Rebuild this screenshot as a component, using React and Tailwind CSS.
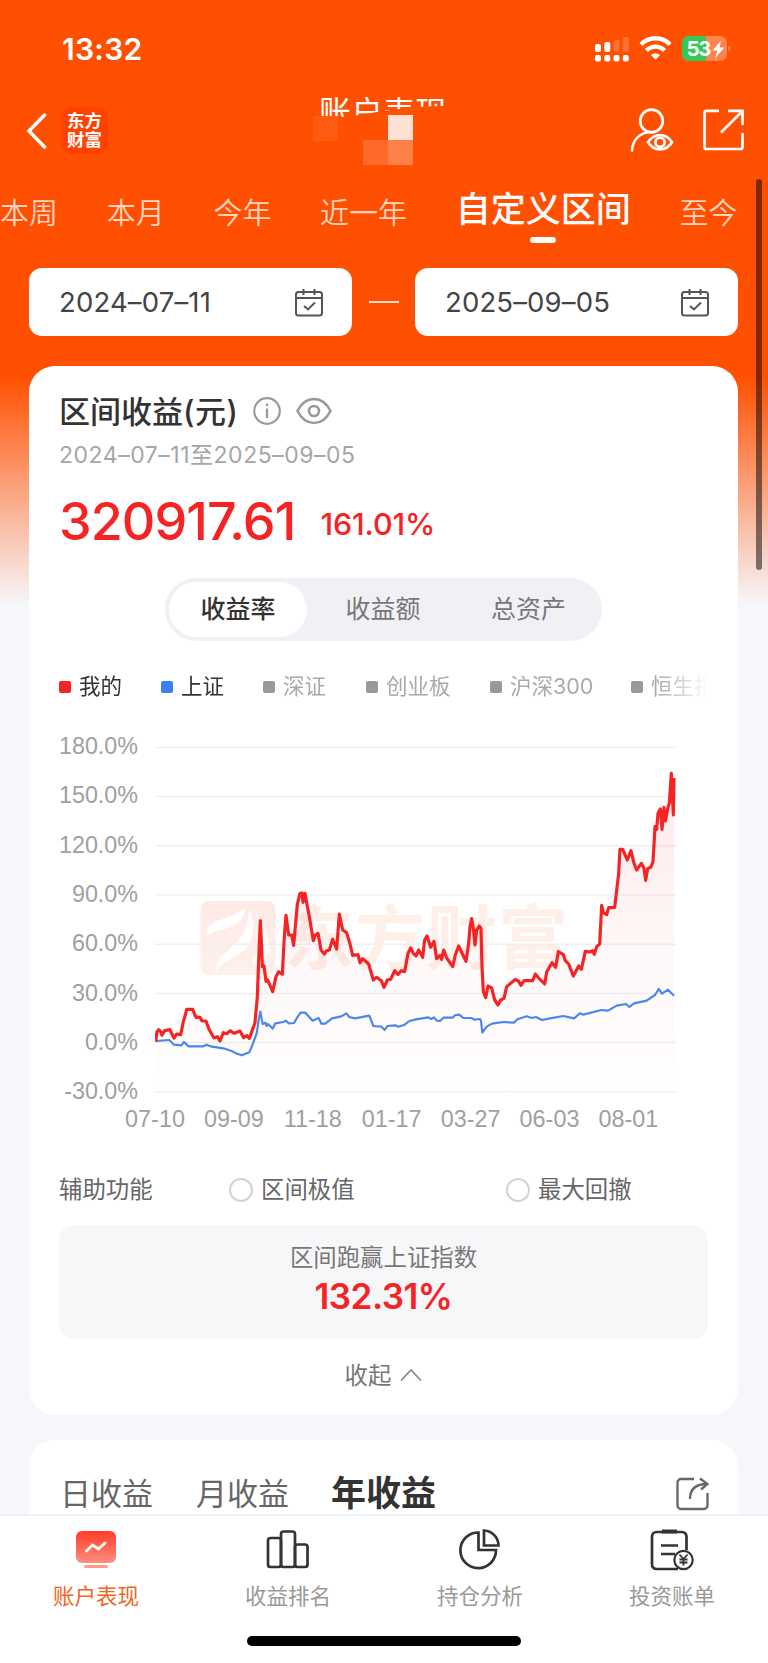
import React from "react";

const ranges = ["本周", "本月", "今年", "近一年", "自定义区间", "至今"];

const legend = [
  { name: "我的", dot: "bg-[#f52323]", text: "text-[#333]", width: "w-[102px]" },
  { name: "上证", dot: "bg-[#3b7ff0]", text: "text-[#333]", width: "w-[102px]" },
  { name: "深证", dot: "bg-[#999]", text: "text-[#aaa]", width: "w-[103px]" },
  { name: "创业板", dot: "bg-[#999]", text: "text-[#aaa]", width: "w-[124px]" },
  { name: "沪深300", dot: "bg-[#999]", text: "text-[#aaa]", width: "w-[141px]" },
  { name: "恒生指", dot: "bg-[#999]", text: "text-[#aaa]", width: "w-[141px]" },
];

const yLabels = ["180.0%", "150.0%", "120.0%", "90.0%", "60.0%", "30.0%", "0.0%", "-30.0%"];
const xLabels = ["07-10", "09-09", "11-18", "01-17", "03-27", "06-03", "08-01"];

const mine =
  "347,965 351,935 356,929 362,935 366,946 374,932 390,929 396,943 402,954 410,942 422,944 430,905 436,885 440,868 458,868 468,892 480,892 486,903 498,903 507,928 522,954 532,950 540,963 550,938 560,941 571,932 582,940 600,933 611,953 620,947 628,955 636,933 645,908 652,830 656,720 661,602 664,660 667,740 672,738 678,784 683,780 698,815 708,770 716,755 727,763 733,650 738,586 746,645 755,645 761,676 772,553 780,520 786,519 789,547 795,520 800,548 808,590 820,662 826,645 834,640 843,690 853,702 860,692 868,690 878,658 890,687 898,582 908,630 920,638 930,672 938,706 954,704 960,728 968,716 986,732 1000,780 1010,772 1024,782 1032,802 1042,780 1052,778 1064,752 1074,763 1084,752 1094,755 1104,700 1112,684 1120,700 1128,708 1136,690 1148,712 1154,660 1161,648 1172,682 1182,664 1190,716 1200,706 1205,718 1211,690 1220,714 1238,740 1246,705 1256,678 1278,724 1286,670 1290,620 1295,596 1300,625 1305,675 1310,630 1318,618 1323,625 1326,740 1330,815 1337,833 1344,798 1355,804 1364,840 1374,855 1382,840 1392,835 1400,800 1412,790 1426,778 1436,784 1443,796 1452,782 1478,782 1486,762 1496,774 1514,792 1520,756 1536,728 1547,742 1555,695 1570,704 1576,722 1586,732 1600,768 1616,738 1624,748 1636,694 1650,696 1658,692 1663,703 1670,680 1679,672 1685,556 1690,578 1700,584 1706,563 1724,562 1736,460 1740,388 1748,388 1762,420 1773,392 1782,430 1790,450 1804,430 1812,445 1817,481 1823,446 1833,441 1839,425 1845,320 1850,328 1854,280 1861,267 1866,328 1872,262 1876,303 1884,262 1888,250 1894,160 1900,285 1902,174";

const index =
  "347,963 388,960 402,974 424,976 432,966 446,979 490,979 500,974 516,980 550,985 575,993 588,1000 605,1006 628,997 636,978 650,940 656,900 661,875 668,912 676,908 680,918 684,912 698,926 706,910 730,906 738,902 746,910 762,909 772,892 782,878 796,878 818,902 836,894 844,911 856,911 876,895 904,889 919,880 928,891 945,895 988,887 1000,918 1024,920 1034,930 1042,918 1066,916 1075,920 1094,914 1108,903 1128,898 1164,892 1174,897 1182,892 1190,902 1200,903 1210,893 1238,893 1246,885 1258,884 1270,894 1294,894 1304,899 1320,897 1323,903 1327,938 1340,920 1356,911 1390,906 1422,908 1432,898 1460,889 1475,894 1488,891 1506,900 1526,896 1570,888 1602,895 1620,880 1630,884 1684,870 1704,872 1730,857 1758,852 1768,861 1782,850 1820,842 1845,825 1856,807 1866,821 1884,809 1902,827";

function StatusBar() {
  return (
    <div className="flex h-[98px] items-center justify-between pr-[36px] pl-[62px]">
      <span className="text-[30px] leading-none font-semibold tracking-[0.3px]">13:32</span>
      <svg width="138" height="28" viewBox="0 0 138 28" fill="#fff">
        <rect x="1" y="9" width="6" height="8" rx="2" />
        <rect x="10.300" y="7" width="6" height="10" rx="2" />
        <rect x="19.500" y="5" width="6" height="12" rx="2" opacity=".2" />
        <rect x="28.800" y="2" width="6" height="15" rx="2" opacity=".2" />
        <rect x="1" y="20" width="6" height="6.500" rx="2" />
        <rect x="10.300" y="20" width="6" height="6.500" rx="2" />
        <rect x="19.500" y="20" width="6" height="6.500" rx="2" />
        <rect x="28.800" y="20" width="6" height="6.500" rx="2" />
        <g fill="none" stroke="#fff" strokeWidth="4.400">
          <path d="M47 9.500a20 20 0 0 1 29 0" />
          <path d="M52.500 15.500a12.500 12.500 0 0 1 18 0" />
        </g>
        <path d="M57 20a6.500 6.500 0 0 1 9 0L61.500 24.700Z" />
        <rect x="88" y="1" width="45" height="25" rx="7" opacity=".3" />
        <path d="M95 1h17v25H95a7 7 0 0 1-7-7V8a7 7 0 0 1 7-7Z" fill="#34c759" />
        <path d="M134.500 10.500a3.500 3.500 0 0 1 0 6Z" opacity=".4" />
        <text x="92.500" y="21" fontSize="20.500" fontWeight="700" textLength="25">53</text>
        <path d="M127 5.500l-8.500 10h5L121 23l9.500-10.500h-5Z" />
      </svg>
    </div>
  );
}

function TitleBar() {
  return (
    <div className="flex h-[80px] items-center justify-between pr-[24px] pl-[26px]">
      <div className="flex items-center gap-[14px]">
        <svg className="mt-[-15px]" width="21" height="36" viewBox="0 0 21 36" fill="none" stroke="#fff" strokeWidth="3.500">
          <path d="M18.500 2L3 18l15.500 16" strokeLinecap="round" />
        </svg>
        <div className="mt-[-16px] flex h-[47px] w-[47px] flex-col items-center justify-center rounded-[10px] bg-[#ff4200] text-[17.500px] leading-[19px] font-bold">
          <span>东方</span>
          <span>财富</span>
        </div>
      </div>
      <div className="relative left-[3px] h-[80px] w-[128px]">
        <h1 className="absolute top-[-1px] left-[11px] text-[32px] leading-[32px] whitespace-nowrap [clip-path:polygon(0_0,100%_0,100%_27%,75%_31%,50%_44%,25%_60%,0_66%)]">
          账户表现
        </h1>
        <i className="absolute top-[18px] left-[5px] size-[25px] bg-[#ff5b13]" />
        <i className="absolute top-[17px] left-[80px] size-[25px] bg-[#ffe0d3]" />
        <i className="absolute top-[42px] left-[55px] size-[25px] bg-[#ff6a2a]" />
        <i className="absolute top-[42px] left-[80px] size-[25px] bg-[#ff8048]" />
      </div>
      <svg className="mt-[-16px]" width="114" height="44" viewBox="0 0 114 44" fill="none" stroke="#fff" strokeWidth="2.700">
        <circle cx="21.500" cy="13" r="11.300" />
        <path d="M2 42.500C2.700 31 10.500 24.500 21 24" strokeLinecap="round" />
        <path d="M18 34.200C21 29.500 25 27 30 27s9 2.500 12 7.200c-3 4.700-7 7.200-12 7.200s-9-2.500-12-7.200Z" />
        <circle cx="30" cy="34.200" r="4.600" />
        <path d="M89 2.800H76.500a2 2 0 0 0-2 2V39a2 2 0 0 0 2 2H110.500a2 2 0 0 0 2-2V25M98 2.800h14.500V17M112 3.500L91 24.500" />
      </svg>
    </div>
  );
}

function DateBox({ value }) {
  return (
    <div className="flex h-[68px] w-[323px] items-center justify-between rounded-[13px] bg-white pr-[29px] pl-[30px]">
      <span className="mt-[2px] text-[27.500px] leading-none tracking-[0.15px] text-[#444]">{value}</span>
      <svg width="28" height="29" viewBox="0 0 28 29" fill="none" stroke="#555" strokeWidth="2">
        <rect x="1" y="4" width="26" height="23.500" rx="2.500" />
        <path d="M1 10h26M8.500 1v6M19.500 1v6M9 18l4 3.500 7-7" />
      </svg>
    </div>
  );
}

function Chart() {
  return (
    <svg className="block" width="650" height="410" viewBox="59 730 650 410">
      <defs>
        <linearGradient id="area" x1="0" y1="0" x2="0" y2="1">
          <stop offset="0" stopColor="#f52323" stopOpacity=".1" />
          <stop offset=".6" stopColor="#f52323" stopOpacity=".03" />
          <stop offset="1" stopColor="#f52323" stopOpacity=".008" />
        </linearGradient>
        <linearGradient id="mark" x1="0" y1="0" x2="0" y2="1">
          <stop offset="0" stopColor="#fdeae7" />
          <stop offset="1" stopColor="#fef0ea" />
        </linearGradient>
      </defs>
      <rect x="200.500" y="901" width="75" height="74" rx="8" fill="url(#mark)" />
      <path
        d="M207 932c0-14 24-11 38-24-1 15-14 20-24 22-7 1-10 4-14 6ZM216 971c2-24 31-20 33-62 9 20 3 38-11 46-10 5-16 9-22 16ZM252 960c10-12 11-28 3-50 8 12 14 26 15 42-7 6-11 11-11 21-3-8-4-10-7-13Z"
        fill="#fff"
      />
      <text x="284" y="964" fontSize="70" fontWeight="700" fill="#feefe8" textLength="284">
        东方财富
      </text>
      {yLabels.map((label, i) => (
        <g key={label}>
          <path d={`M155 ${747.4 + i * 49.2}H676`} stroke="#eff0f4" strokeWidth="1.500" />
          <text x="138" y={754 + i * 49.3} textAnchor="end" fontSize="23.300" fill="#a0a0a0" className="font-['Liberation_Sans']">
            {label}
          </text>
        </g>
      ))}
      {xLabels.map((label, i) => (
        <text key={label} x={155 + i * 78.9} y="1127" textAnchor="middle" fontSize="23.400" fill="#a0a0a0" className="font-['Liberation_Sans']">
          {label}
        </text>
      ))}
      <svg x="155" y="740" width="522" height="360" viewBox="345 60 1566 1080" fill="none" strokeLinejoin="round">
        <polygon points={`347,1115 ${mine} 1904,1115`} fill="url(#area)" />
        <polyline points={index} stroke="#4a86ee" strokeWidth="6.500" />
        <polyline points={mine} stroke="#f52323" strokeWidth="9.500" />
      </svg>
    </svg>
  );
}

function PerformanceCard() {
  return (
    <section className="mt-[30px] mr-[30px] ml-[29px] h-[1049px] rounded-[26px] bg-white px-[30px] pt-[23px]">
      <div className="flex h-[44px] items-center">
        <h2 className="text-[31px] leading-none font-medium text-[#333]">
          区间收益<span className="tracking-[0.5px]">(元)</span>
        </h2>
        <svg className="ml-[14px]" width="82" height="30" viewBox="0 0 82 30" fill="none" stroke="#999" strokeWidth="2.200">
          <circle cx="15" cy="15" r="12.800" />
          <path d="M15 12.500V22M15 7.500V10" strokeWidth="2.300" />
          <path d="M45.500 15C50 6 56 3 62 3S74 6 78.500 15C74 24 68 27 62 27S50 24 45.500 15Z" strokeWidth="2.600" />
          <circle cx="62" cy="15" r="5" strokeWidth="2.600" />
        </svg>
      </div>
      <p className="mt-[1px] flex h-[42px] items-center text-[23px] leading-none tracking-[0.52px] text-[#a6a6a6]">
        2024–07–11至2025–09–05
      </p>
      <div className="mt-[14px] flex h-[64px] items-center text-[#f52323]">
        <span className="text-[52px] leading-[64px] font-medium tracking-[-0.9px]">320917.61</span>
        <span className="mt-[4px] ml-[25px] text-[30.500px] leading-none font-medium tracking-[-0.1px]">161.01%</span>
      </div>
      <div className="mt-[24px] ml-[106px] flex h-[63px] w-[437px] items-center rounded-full bg-[#f1f1f5] p-[4px] text-[25px] leading-none text-[#777]">
        <span className="flex h-full w-[138px] items-center justify-center rounded-full bg-white font-medium text-[#333]">
          收益率
        </span>
        <span className="w-[152px] text-center">收益额</span>
        <span className="w-[139px] text-center">总资产</span>
      </div>
      <div className="mt-[30px] flex h-[32px] overflow-hidden [mask-image:linear-gradient(to_right,#000_92%,transparent_100%)]">
        {legend.map((item) => (
          <div key={item.name} className={`flex shrink-0 items-center ${item.width}`}>
            <i className={`mr-[8px] size-[12px] rounded-[2px] ${item.dot}`} />
            <span className={`text-[21.500px] leading-none whitespace-nowrap ${item.text}`}>{item.name}</span>
          </div>
        ))}
      </div>
      <div className="mt-[27px]">
        <Chart />
      </div>
      <div className="mt-[34px] flex h-[32px] items-center text-[23.400px] leading-none text-[#666]">
        <span className="w-[170px]">辅助功能</span>
        <span className="flex w-[277px] items-center gap-[8px]">
          <i className="size-[24px] rounded-full border-2 border-[#d3d3d3]" />
          区间极值
        </span>
        <span className="flex items-center gap-[8px]">
          <i className="size-[24px] rounded-full border-2 border-[#d3d3d3]" />
          最大回撤
        </span>
      </div>
      <div className="mt-[19px] flex h-[114px] flex-col items-center rounded-[15px] bg-[#f7f7fa] pt-[18px]">
        <span className="text-[23.400px] leading-[30px] text-[#777]">区间跑赢上证指数</span>
        <span className="mt-[3px] text-[35px] leading-[40px] font-semibold tracking-[-0.5px] text-[#f52323]">132.31%</span>
      </div>
      <div className="mt-[19px] flex h-[36px] items-center justify-center gap-[9px] text-[23.400px] leading-none text-[#777]">
        收起
        <svg className="mt-[-2px]" width="22" height="14" viewBox="0 0 22 14" fill="none" stroke="#888" strokeWidth="1.700">
          <path d="M1 12.500L11 2l10 10.500" />
        </svg>
      </div>
    </section>
  );
}

function IncomeCard() {
  return (
    <section className="mt-[25px] mr-[30px] ml-[29px] flex h-[74px] items-end rounded-t-[26px] bg-white pr-[29px] pb-[2px] pl-[31px] text-[#666]">
      <div className="mb-[1px] flex h-[36px] flex-1 items-center text-[31px] leading-none">
        <span className="w-[136px]">日收益</span>
        <span className="w-[135px]">月收益</span>
        <span className="text-[35px] font-bold text-[#333]">年收益</span>
      </div>
      <svg className="mb-[1px]" width="33" height="34" viewBox="0 0 33 34" fill="none" stroke="#666" strokeWidth="2.300">
        <path d="M18 2H5a3.500 3.500 0 0 0-3.500 3.500v23A3.500 3.500 0 0 0 5 32h23a3.500 3.500 0 0 0 3.500-3.500V16" />
        <path d="M14 22C14 13 18.500 7 31 7M24 1.500L31.500 7 25 12.500" />
      </svg>
    </section>
  );
}

const tabs = [
  {
    name: "账户表现",
    icon: (
      <>
        <defs>
          <linearGradient id="screen" x1="0" y1="0" x2="0" y2="1">
            <stop offset="0" stopColor="#ff3b26" />
            <stop offset="1" stopColor="#ff8f82" />
          </linearGradient>
        </defs>
        <rect x="2" y="3" width="40" height="32" rx="6" fill="url(#screen)" />
        <rect x="10" y="37" width="24" height="3" rx="1.500" fill="#ff9a8e" />
        <path d="M12.500 23l6-6 6 4 6.500-6" stroke="#fff" strokeWidth="2.800" strokeLinecap="round" />
      </>
    ),
  },
  {
    name: "收益排名",
    icon: (
      <>
        <rect x="2" y="10" width="13" height="29" rx="2.500" />
        <rect x="15" y="3.500" width="14" height="35.500" rx="2.500" />
        <rect x="29" y="16.500" width="12.500" height="22.500" rx="2.500" />
      </>
    ),
  },
  {
    name: "持仓分析",
    icon: (
      <>
        <path d="M20.500 4.500A17.800 17.800 0 1 0 38 22H20.500Z" />
        <path d="M26 2.500V17.500H40.500A15 15 0 0 0 26 2.500Z" />
      </>
    ),
  },
  {
    name: "投资账单",
    icon: (
      <>
        <path d="M36.500 22V8.500A4.500 4.500 0 0 0 32 4H6.500A4.500 4.500 0 0 0 2 8.500v28a4.500 4.500 0 0 0 4.500 4.500H28" />
        <path d="M12 3.500h15" strokeWidth="4" />
        <path d="M11 17.500h17M11 26h14" />
        <circle cx="33.500" cy="32" r="9.200" fill="#fff" strokeWidth="2.200" />
        <path d="M29.500 26.500l4 4.500 4-4.500M33.500 31V37.500M29.500 31.500h8M29.500 34.500h8" strokeWidth="1.800" />
      </>
    ),
  },
];

function TabBar() {
  return (
    <nav className="h-[149px] border-t-2 border-[#f1f2f4] bg-white">
      <div className="grid grid-cols-4">
        {tabs.map((tab, i) => (
          <div key={tab.name} className="flex flex-col items-center pt-[12px]">
            <svg width="44" height="44" viewBox="0 0 44 44" fill="none" stroke={i === 0 ? "none" : "#333"} strokeWidth="2.700">
              {tab.icon}
            </svg>
            <span className={`mt-[9px] text-[21.500px] leading-[30px] ${i === 0 ? "text-[#f26522]" : "text-[#999]"}`}>
              {tab.name}
            </span>
          </div>
        ))}
      </div>
      <div className="mx-auto mt-[25px] h-[10px] w-[274px] rounded-full bg-black" />
    </nav>
  );
}

export default function App() {
  return (
    <div className="relative h-[1663px] w-[768px] overflow-hidden bg-[#f6f7fb] bg-[linear-gradient(to_bottom,#ff4f00_0px,#ff4f00_375px,#f6f7fb_605px)] font-['Inter','Noto_Sans_CJK_SC',sans-serif]">
      <header className="text-white">
        <StatusBar />
        <TitleBar />
        <div className="flex h-[68px] items-center gap-[48.700px] overflow-hidden whitespace-nowrap">
          {ranges.map((range) =>
            range === "自定义区间" ? (
              <span key={range} className="flex flex-col items-center text-[35px] leading-[40px] font-medium">
                {range}
                <i className="mt-[8px] mb-[-8px] h-[6px] w-[26px] rounded-full bg-white" />
              </span>
            ) : (
              <span key={range} className="mt-[2px] text-[29px] leading-none font-[350] text-white/75">
                {range}
              </span>
            ),
          )}
        </div>
        <div className="mt-[22px] flex items-center justify-between pr-[30px] pl-[29px]">
          <DateBox value="2024–07–11" />
          <i className="h-[2px] w-[30px] bg-white/80" />
          <DateBox value="2025–09–05" />
        </div>
      </header>
      <PerformanceCard />
      <IncomeCard />
      <TabBar />
      <div className="absolute top-[179px] right-[6px] h-[391px] w-[6px] rounded-full bg-black/50" />
    </div>
  );
}
